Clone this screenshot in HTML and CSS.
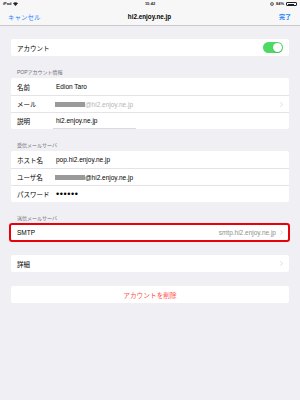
FILE: index.html
```html
<!DOCTYPE html>
<html lang="ja">
<head>
<meta charset="utf-8">
<link rel="stylesheet" href="styles.css">
</head>
<body>
<header class="top">
  <div class="status">
    <div class="st-left">iPad
      <svg class="wifi" width="5" height="4" viewBox="0 0 10 8"><path d="M5 8 L0 2.5 A7.5 7.5 0 0 1 10 2.5 Z" fill="#222"/></svg>
    </div>
    <div class="st-time">15:42</div>
    <div class="st-right">
      <svg class="lock" width="4" height="4" viewBox="0 0 8 8"><circle cx="4" cy="4" r="3" fill="none" stroke="#222" stroke-width="1.3"/><circle cx="4" cy="4" r="1.2" fill="#222"/></svg>
      <span>84%</span>
      <span class="battery"><span class="battery-fill"></span></span>
    </div>
  </div>
  <nav class="nav">
    <span class="nav-btn">キャンセル</span>
    <span class="nav-title">hi2.enjoy.ne.jp</span>
    <span class="nav-btn nav-done">完了</span>
  </nav>
</header>

<main class="content">
  <section class="card first">
    <div class="row">
      <span class="label">アカウント</span>
      <span class="spacer"></span>
      <span class="toggle"><span class="knob"></span></span>
    </div>
  </section>

  <div class="hdr">POPアカウント情報</div>
  <section class="card">
    <div class="row">
      <span class="label">名前</span>
      <span class="value">Edion Taro</span>
    </div>
    <div class="row">
      <span class="label">メール</span>
      <span class="value"><span class="redact"></span><span class="placeholder">@hi2.enjoy.ne.jp</span></span>
      <span class="chev"><svg width="3" height="5" viewBox="0 0 3 5"><path d="M0.5 0.5 L2.5 2.5 L0.5 4.5" fill="none" stroke="#c7c7cc" stroke-width="0.7"/></svg></span>
    </div>
    <div class="row">
      <span class="label">説明</span>
      <span class="value underline">hi2.enjoy.ne.jp</span>
    </div>
  </section>

  <div class="hdr">受信メールサーバ</div>
  <section class="card">
    <div class="row">
      <span class="label">ホスト名</span>
      <span class="value">pop.hi2.enjoy.ne.jp</span>
    </div>
    <div class="row">
      <span class="label">ユーザ名</span>
      <span class="value"><span class="redact"></span>@hi2.enjoy.ne.jp</span>
    </div>
    <div class="row">
      <span class="label">パスワード</span>
      <span class="value dots">••••••</span>
    </div>
  </section>

  <div class="hdr hdr-smtp">送信メールサーバ</div>
  <section class="card smtp">
    <div class="row">
      <span class="label">SMTP</span>
      <span class="spacer"></span>
      <span class="detail">smtp.hi2.enjoy.ne.jp</span>
      <span class="chev"><svg width="3" height="5" viewBox="0 0 3 5"><path d="M0.5 0.5 L2.5 2.5 L0.5 4.5" fill="none" stroke="#c7c7cc" stroke-width="0.7"/></svg></span>
    </div>
  </section>

  <section class="card gap">
    <div class="row">
      <span class="label">詳細</span>
      <span class="spacer"></span>
      <span class="chev"><svg width="3" height="5" viewBox="0 0 3 5"><path d="M0.5 0.5 L2.5 2.5 L0.5 4.5" fill="none" stroke="#c7c7cc" stroke-width="0.7"/></svg></span>
    </div>
  </section>

  <section class="card gap2">
    <div class="row center">
      <span class="delete">アカウントを削除</span>
    </div>
  </section>
</main>
</body>
</html>
```

FILE: styles.css
```css
* { box-sizing: border-box; }
html, body {
  margin: 0;
  padding: 0;
}
body {
  width: 300px;
  height: 400px;
  background: #efeff4;
  font-family: "Liberation Sans", "Noto Sans CJK JP", sans-serif;
  color: #000;
  overflow: hidden;
}

.top {
  background: #f7f7f8;
  border-bottom: 1px solid #c9c9ce;
  height: 26px;
}
.status {
  height: 8px;
  display: grid;
  grid-template-columns: 1fr auto 1fr;
  align-items: center;
  font-size: 4px;
  font-weight: bold;
  color: #222;
  padding: 0 3px;
  line-height: 8px;
}
.st-left {
  display: flex;
  align-items: center;
  gap: 2px;
}
.st-time { text-align: center; }
.st-right {
  display: flex;
  justify-content: flex-end;
  align-items: center;
  gap: 2px;
}
.battery {
  width: 11px;
  height: 4px;
  border: 0.6px solid #222;
  border-radius: 1px;
  padding: 0.5px;
  display: flex;
}
.battery-fill {
  width: 84%;
  background: #222;
}

.nav {
  height: 17px;
  display: flex;
  align-items: center;
  justify-content: space-between;
  padding: 0 9px 0 8px;
}
.nav-btn {
  color: #1a82fb;
  font-size: 6.5px;
  width: 40px;
}
.nav-done {
  text-align: right;
  font-weight: bold;
  font-size: 6px;
}
.nav-title {
  font-weight: bold;
  font-size: 6.3px;
}

.content {
  padding: 13px 11px 0 11px;
}
.card {
  background: #fff;
  border-radius: 2px;
}
.hdr {
  height: 22px;
  display: flex;
  align-items: flex-end;
  padding: 0 0 3px 6px;
  font-size: 5px;
  line-height: 6px;
  color: #6d6d72;
}
.hdr-smtp {
  height: 21px;
  padding-bottom: 2px;
}
.row {
  height: 17px;
  display: flex;
  align-items: center;
  padding: 0 6px;
  font-size: 6.5px;
}
.row + .row {
  border-top: 1px solid #e3e3e8;
}
.label {
  width: 36px;
  flex: none;
}
.spacer { flex: 1; }
.value {
  flex: 1;
  display: flex;
  align-items: center;
  height: 100%;
  padding-left: 3px;
}
.underline {
  flex: none;
  width: 83px;
  border-bottom: 1px solid #d9d9de;
}
.redact {
  display: inline-block;
  width: 30px;
  height: 5px;
  background: #9a9a9a;
  margin-left: -1px;
}
.placeholder { color: #b4b4b8; }
.dots {
  font-size: 9px;
  letter-spacing: 0.6px;
  line-height: 1;
}
.chev {
  display: flex;
  align-items: center;
  margin-left: 4px;
  margin-right: 0;
}
.detail {
  color: #8e8e93;
}
.toggle {
  width: 20px;
  height: 11px;
  border-radius: 6px;
  background: #4cd964;
  display: flex;
  justify-content: flex-end;
  align-items: center;
  padding: 0.7px;
}
.knob {
  width: 9.6px;
  height: 9.6px;
  border-radius: 50%;
  background: #fff;
  box-shadow: 0 0.5px 1px rgba(0,0,0,0.25);
}

.smtp {
  margin: 0 -1px 0 -2px;
  border: 2px solid #e8000b;
  border-radius: 3px;
}
.smtp .row {
  height: 15px;
  padding: 0 5px 0 6px;
}
.gap { margin-top: 13px; }
.gap2 { margin-top: 14px; }
.center { justify-content: center; }
.delete {
  color: #ff4f4a;
  font-size: 6.7px;
}
```
